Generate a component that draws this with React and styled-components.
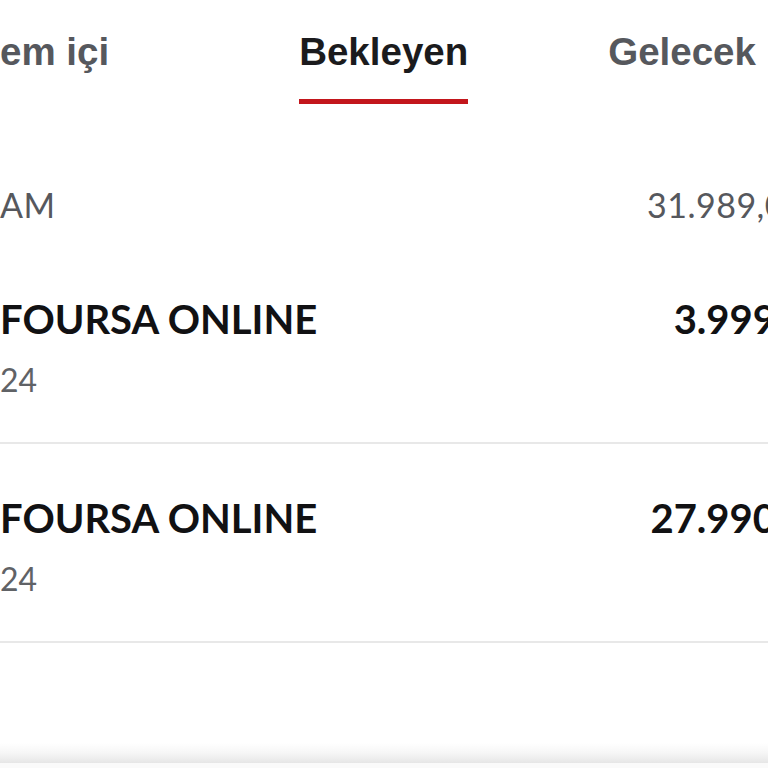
import React from "react";
import styled, { createGlobalStyle } from "styled-components";

const Global = createGlobalStyle`
  html, body { margin: 0; padding: 0; background: #ffffff; }
  body { width: 768px; height: 768px; overflow: hidden; }
  #root { height: 768px; }
`;

const Screen = styled.div`
  width: 768px;
  height: 768px;
  overflow: hidden;
  display: flex;
  flex-direction: column;
  background: #fff;
`;

const Sheet = styled.div`
  width: 900px;
  flex: 1;
  display: flex;
  flex-direction: column;
`;

const TabBar = styled.nav`
  display: flex;
  align-items: flex-start;
  padding-top: 30px;
`;

const Tab = styled.div`
  display: flex;
  flex-direction: column;
  align-items: stretch;
  margin-left: ${(p) => p.$offset}px;
`;

const TabLabel = styled.span`
  font-family: "Liberation Sans", Arial, sans-serif;
  font-weight: 700;
  font-size: 38.5px;
  line-height: 44px;
  white-space: nowrap;
  color: ${(p) => (p.$active ? "#1b1b1d" : "#56585d")};
`;

const TabIndicator = styled.div`
  height: 5px;
  margin-top: 25px;
  background: ${(p) => (p.$active ? "#c3161c" : "transparent")};
`;

const Prefix = styled.span`
  display: inline-block;
  width: 0;
  direction: rtl;
  white-space: nowrap;
`;

const TotalRow = styled.div`
  display: flex;
  justify-content: space-between;
  align-items: baseline;
  margin-top: 81px;
  padding-right: 48px;
  font-family: Lato, "Noto Sans", sans-serif;
  font-size: 34px;
  line-height: 40px;
  color: #56585d;
  letter-spacing: 0.5px;
`;

const TotalLabel = styled.span`
  white-space: nowrap;
`;

const TotalValue = styled.span`
  white-space: nowrap;
`;

const List = styled.div`
  margin-top: 20px;
  display: flex;
  flex-direction: column;
`;

const Item = styled.div`
  display: grid;
  grid-template-columns: 1fr auto;
  column-gap: 24px;
  padding: 50px 15px 42px 0;
  border-bottom: 2px solid #e8e8e8;
`;

const Info = styled.div`
  display: flex;
  flex-direction: column;
  gap: 17px;
`;

const Merchant = styled.span`
  font-family: Lato, "Noto Sans", sans-serif;
  font-weight: 700;
  font-size: 40px;
  line-height: 48px;
  color: #111113;
  white-space: nowrap;
`;

const DateText = styled.span`
  font-family: Lato, "Noto Sans", sans-serif;
  font-size: 32px;
  line-height: 40px;
  color: #606266;
  white-space: nowrap;
`;

const Amount = styled.span`
  font-family: Lato, "Noto Sans", sans-serif;
  font-weight: 700;
  font-size: 40px;
  line-height: 48px;
  color: #111113;
  white-space: nowrap;
  text-align: right;
`;

const Spacer = styled.div`
  flex: 1;
`;

const BottomShade = styled.div`
  height: 20px;
  background: linear-gradient(to bottom, #ffffff 0%, #f6f6f6 50%, #e6e6e6 100%);
`;

const BottomBar = styled.div`
  height: 5px;
  background: #fafafa;
`;

const tabs = [
  { prefix: "İşl", label: "em içi", offset: 0 },
  { label: "Bekleyen", offset: 190, active: true },
  { label: "Gelecek", offset: 140 },
];

const items = [
  { merchant: "FOURSA ONLINE", date: "24", amount: "3.999,00 TL" },
  { merchant: "FOURSA ONLINE", date: "24", amount: "27.990,00 TL" },
];

export default function App() {
  return (
    <>
      <Global />
      <Screen>
        <Sheet>
          <TabBar>
            {tabs.map((t) => (
              <Tab key={t.label} $offset={t.offset}>
                <TabLabel $active={t.active}>
                  {t.prefix && <Prefix>{t.prefix}</Prefix>}
                  {t.label}
                </TabLabel>
                <TabIndicator $active={t.active} />
              </Tab>
            ))}
          </TabBar>
          <TotalRow>
            <TotalLabel>
              <Prefix>TOPL</Prefix>AM
            </TotalLabel>
            <TotalValue>31.989,00 TL</TotalValue>
          </TotalRow>
          <List>
            {items.map((it, i) => (
              <Item key={i}>
                <Info>
                  <Merchant>{it.merchant}</Merchant>
                  <DateText>{it.date}</DateText>
                </Info>
                <Amount>{it.amount}</Amount>
              </Item>
            ))}
          </List>
          <Spacer />
        </Sheet>
        <BottomShade />
        <BottomBar />
      </Screen>
    </>
  );
}
